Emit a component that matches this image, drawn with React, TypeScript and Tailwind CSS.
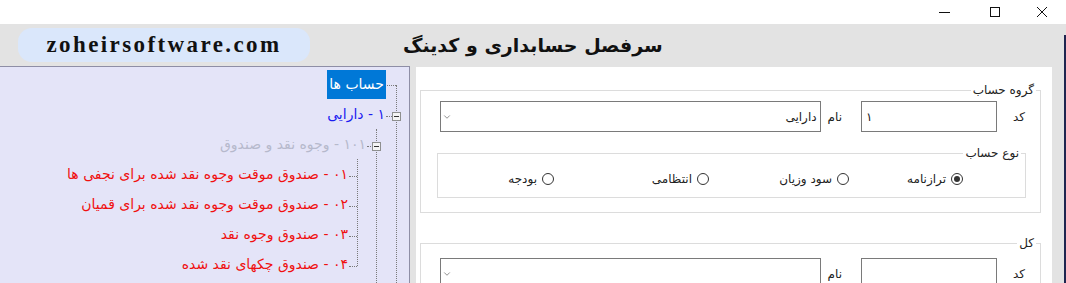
import { ChevronDown } from "lucide-react";

const fa = { fontFamily: '"DejaVu Sans", sans-serif' };

type Row = { text: string; pr: string; color: string; selected?: boolean };

const rows: Row[] = [
  { text: "حساب ها", pr: "pr-[23px]", color: "text-white", selected: true },
  { text: "۱ - دارایی", pr: "pr-[24px]", color: "text-[#1c1cf0]" },
  { text: "۱۰۱ - وجوه نقد و صندوق", pr: "pr-[43px]", color: "text-[#b6b9cc]" },
  { text: "۰۱ - صندوق موقت وجوه نقد شده برای نجفی ها", pr: "pr-[61px]", color: "text-[#f01010]" },
  { text: "۰۲ - صندوق موقت وجوه نقد شده برای قمیان", pr: "pr-[61px]", color: "text-[#f01010]" },
  { text: "۰۳ - صندوق وجوه نقد", pr: "pr-[61px]", color: "text-[#f01010]" },
  { text: "۰۴ - صندوق چکهای نقد شده", pr: "pr-[61px]", color: "text-[#f01010]" },
];

function Expander({ className }: { className: string }) {
  return (
    <div className={`absolute w-[9px] h-[9px] border border-[#8e8f8f] bg-[#f4f4f4] flex items-center justify-center ${className}`}>
      <div className="w-[5px] h-[1px] bg-[#333]" />
    </div>
  );
}

function Tree() {
  return (
    <div className="relative w-[410px] h-full bg-[#e4e4f8] border-t border-r border-[#8e8ea6] pt-[2px]" style={fa}>
      {/* connector lines */}
      <div className="absolute left-[396px] top-[18px] bottom-0 border-l border-dotted border-[#7a7a7a]" />
      <div className="absolute left-[387px] top-[18px] w-[9px] border-t border-dotted border-[#7a7a7a]" />
      <div className="absolute left-[386px] top-[49px] w-[6px] border-t border-dotted border-[#7a7a7a]" />
      <Expander className="left-[392px] top-[45px]" />
      <div className="absolute left-[376px] top-[62px] bottom-0 border-l border-dotted border-[#7a7a7a]" />
      <div className="absolute left-[367px] top-[79px] w-[6px] border-t border-dotted border-[#7a7a7a]" />
      <Expander className="left-[372px] top-[75px]" />
      <div className="absolute left-[357px] top-[92px] h-[107px] border-l border-dotted border-[#7a7a7a]" />
      {[109, 139, 169, 199].map((t) => (
        <div key={t} className="absolute left-[349px] w-[8px] border-t border-dotted border-[#7a7a7a]" style={{ top: t }} />
      ))}
      <div className="flex flex-col">
        {rows.map((r) => (
          <div key={r.text} dir="rtl" className={`h-[30px] flex items-center ${r.pr}`}>
            <span
              className={`text-[14px] leading-[29px] whitespace-nowrap ${r.color} ${r.selected ? "bg-[#0078d7] px-[2px]" : ""}`}
            >
              {r.text}
            </span>
          </div>
        ))}
      </div>
    </div>
  );
}

function Radio({ label, checked, w }: { label: string; checked?: boolean; w: string }) {
  return (
    <div className={`flex items-center gap-[5px] ${w}`}>
      <div className="w-[12px] h-[12px] rounded-full border border-[#333] flex items-center justify-center bg-white">
        {checked && <div className="w-[6px] h-[6px] rounded-full bg-[#333]" />}
      </div>
      <span className="text-[12px] text-[#222]">{label}</span>
    </div>
  );
}

function CodeRow({ code, name }: { code: string; name: string }) {
  return (
    <div className="flex items-center h-[31px] pr-[15px] pl-[16px]">
      <span className="w-[28px] text-[12px] text-[#222]">کد</span>
      <div dir="ltr" className="w-[136px] h-[31px] border border-[#7a7a7a] flex items-center px-[4px] text-[12px] text-[#222]">
        {code}
      </div>
      <span className="ml-[7px] mr-[19px] text-[12px] text-[#222]">نام</span>
      <div className="w-[381px] h-[31px] border border-[#7a7a7a] flex items-center justify-between pr-[3px] pl-[1px] text-[12px] text-[#222]">
        <span>{name}</span>
        <ChevronDown size={10} strokeWidth={1.4} className="text-[#444]" />
      </div>
    </div>
  );
}

export default function App() {
  return (
    <div className="w-[1066px] h-[283px] overflow-hidden bg-[#e3e3e3] flex flex-col">
      {/* title bar */}
      <div className="h-[24px] bg-white flex items-center justify-end shrink-0">
        <div className="w-[11px] h-[1px] bg-[#111] mr-[40px] mt-[1px]" />
        <div className="w-[10px] h-[10px] border border-[#111] mr-[36px]" />
        <svg width="12" height="12" viewBox="0 0 12 12" className="mr-[18px]">
          <path d="M1 1 L11 11 M11 1 L1 11" stroke="#111" strokeWidth="1" />
        </svg>
      </div>

      {/* header */}
      <div className="h-[42px] flex items-center shrink-0">
        <div className="ml-[18px] w-[292px] h-[34px] rounded-[14px] bg-[#dae7fb] flex items-center justify-center">
          <span className="text-[23px] font-bold tracking-[2.4px] text-[#111]" style={{ fontFamily: '"Liberation Serif", serif' }}>
            zoheirsoftware.com
          </span>
        </div>
        <div dir="rtl" className="ml-[93px] text-[19px] font-bold text-[#111]" style={fa}>
          سرفصل حسابداری و کدینگ
        </div>
      </div>

      {/* body */}
      <div className="flex-1 flex min-h-0">
        <Tree />
        <div dir="rtl" className="w-[636px] ml-[6px] mt-[1px] bg-white pt-[14px] pr-[11px] pl-[4px]" style={fa}>
          <fieldset className="border border-[#dcdcdc] pb-[14px]">
            <legend className="mr-[4px] px-[2px] text-[12px] text-[#222]">گروه حساب</legend>
            <div className="mt-[2px]">
              <CodeRow code="۱" name="دارایی" />
            </div>
            <fieldset className="mt-[12px] mr-[14px] ml-[16px] border border-[#dcdcdc] h-[54px]">
              <legend className="mr-[4px] px-[2px] text-[12px] text-[#222]">نوع حساب</legend>
              <div className="flex items-center pr-[62px] mt-[8px]">
                <Radio label="ترازنامه" checked w="w-[114px]" />
                <Radio label="سود وزیان" w="w-[140px]" />
                <Radio label="انتظامی" w="w-[155px]" />
                <Radio label="بودجه" w="w-[100px]" />
              </div>
            </fieldset>
          </fieldset>
          <fieldset className="mt-[21px] border border-[#dcdcdc] h-[60px]">
            <legend className="mr-[4px] px-[2px] text-[12px] text-[#222]">کل</legend>
            <div className="mt-[6px]">
              <CodeRow code="" name="" />
            </div>
          </fieldset>
        </div>
        <div className="w-[12px]" />
        <div className="w-[2px] mt-[-31px] bg-[#1f2550]" />
      </div>
    </div>
  );
}
